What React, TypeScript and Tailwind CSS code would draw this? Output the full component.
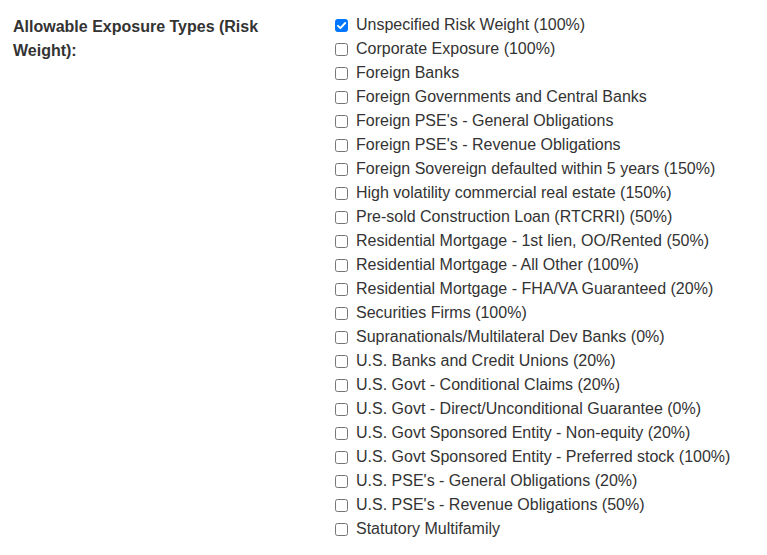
import React, { useState } from 'react';

const exposureTypes = [
  'Unspecified Risk Weight (100%)',
  'Corporate Exposure (100%)',
  'Foreign Banks',
  'Foreign Governments and Central Banks',
  "Foreign PSE's - General Obligations",
  "Foreign PSE's - Revenue Obligations",
  'Foreign Sovereign defaulted within 5 years (150%)',
  'High volatility commercial real estate (150%)',
  'Pre-sold Construction Loan (RTCRRI) (50%)',
  'Residential Mortgage - 1st lien, OO/Rented (50%)',
  'Residential Mortgage - All Other (100%)',
  'Residential Mortgage - FHA/VA Guaranteed (20%)',
  'Securities Firms (100%)',
  'Supranationals/Multilateral Dev Banks (0%)',
  'U.S. Banks and Credit Unions (20%)',
  'U.S. Govt - Conditional Claims (20%)',
  'U.S. Govt - Direct/Unconditional Guarantee (0%)',
  'U.S. Govt Sponsored Entity - Non-equity (20%)',
  'U.S. Govt Sponsored Entity - Preferred stock (100%)',
  "U.S. PSE's - General Obligations (20%)",
  "U.S. PSE's - Revenue Obligations (50%)",
  'Statutory Multifamily',
];

const App: React.FC = () => {
  const [checked, setChecked] = useState<string[]>([exposureTypes[0]]);

  const toggle = (name: string) => {
    setChecked(prev => (prev.includes(name) ? prev.filter(n => n !== name) : [...prev, name]));
  };

  return (
    <div className="min-h-screen bg-white font-['Liberation_Sans',Arial,sans-serif] text-[#333]">
      <div className="flex pt-[13px]">
        {/* Label column */}
        <div className="w-[335px] shrink-0 pl-[13px] pr-[60px] pt-[2px]">
          <label className="block text-[16px] font-bold leading-[24px] text-[#333]">
            Allowable Exposure Types (Risk Weight):
          </label>
        </div>

        {/* Checkbox list */}
        <div className="flex flex-col">
          {exposureTypes.map(name => {
            const isOn = checked.includes(name);
            return (
              <label key={name} className="flex items-center h-[24px] text-[16px] cursor-pointer">
                <span className="relative mr-[8px] flex h-[13px] w-[13px] shrink-0">
                  <input
                    type="checkbox"
                    checked={isOn}
                    onChange={() => toggle(name)}
                    className="m-0 h-[13px] w-[13px] appearance-none rounded-[2.5px] border border-[#767676] bg-white checked:border-[#0075ff] checked:bg-[#0075ff]"
                  />
                  {isOn && (
                    <svg
                      viewBox="0 0 13 13"
                      className="pointer-events-none absolute inset-0 h-[13px] w-[13px]"
                    >
                      <path
                        d="M3 6.8 L5.4 9.2 L10.2 4"
                        fill="none"
                        stroke="white"
                        strokeWidth="1.9"
                        strokeLinecap="round"
                        strokeLinejoin="round"
                      />
                    </svg>
                  )}
                </span>
                <span>{name}</span>
              </label>
            );
          })}
        </div>
      </div>
    </div>
  );
};

export default App;
